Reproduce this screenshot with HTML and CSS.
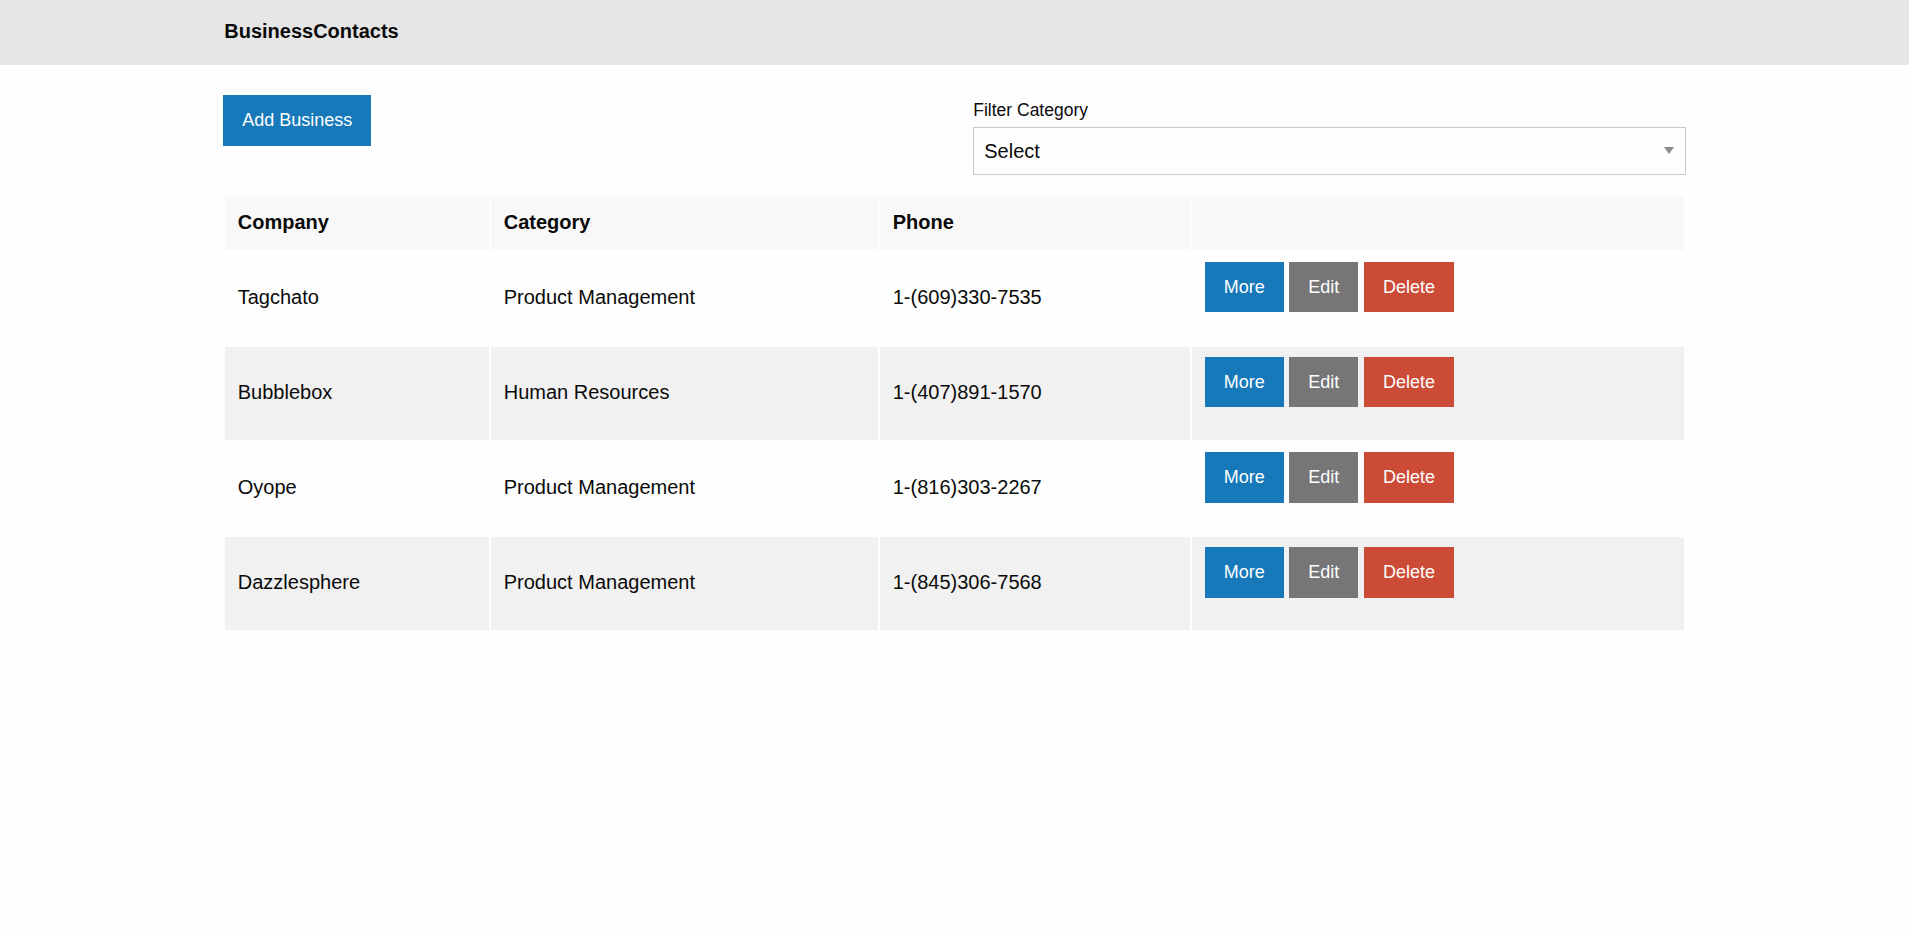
FILE: index.html
```html
<!DOCTYPE html>
<html lang="en">
<head>
<meta charset="utf-8">
<title>BusinessContacts</title>
<link rel="stylesheet" href="styles.css">
</head>
<body>
<header class="topbar">
  <div class="container">
    <span class="brand">BusinessContacts</span>
  </div>
</header>
<main class="container content">
  <div class="toolbar">
    <div class="toolbar-cell">
      <button class="btn btn-primary" type="button">Add Business</button>
    </div>
    <div class="toolbar-cell">
      <label class="field-label">Filter Category
        <span class="select-wrap">
          <select class="select">
            <option>Select</option>
            <option>Product Management</option>
            <option>Human Resources</option>
          </select>
        </span>
      </label>
    </div>
  </div>
  <table class="contacts">
    <colgroup>
      <col class="col-company">
      <col class="col-category">
      <col class="col-phone">
      <col class="col-actions">
    </colgroup>
    <thead>
      <tr><th>Company</th><th>Category</th><th>Phone</th><th></th></tr>
    </thead>
    <tbody>
      <tr>
        <td>Tagchato</td><td>Product Management</td><td>1-(609)330-7535</td>
        <td><button class="btn btn-primary" type="button">More</button> <button class="btn btn-secondary" type="button">Edit</button> <button class="btn btn-alert" type="button">Delete</button></td>
      </tr>
      <tr>
        <td>Bubblebox</td><td>Human Resources</td><td>1-(407)891-1570</td>
        <td><button class="btn btn-primary" type="button">More</button> <button class="btn btn-secondary" type="button">Edit</button> <button class="btn btn-alert" type="button">Delete</button></td>
      </tr>
      <tr>
        <td>Oyope</td><td>Product Management</td><td>1-(816)303-2267</td>
        <td><button class="btn btn-primary" type="button">More</button> <button class="btn btn-secondary" type="button">Edit</button> <button class="btn btn-alert" type="button">Delete</button></td>
      </tr>
      <tr>
        <td>Dazzlesphere</td><td>Product Management</td><td>1-(845)306-7568</td>
        <td><button class="btn btn-primary" type="button">More</button> <button class="btn btn-secondary" type="button">Edit</button> <button class="btn btn-alert" type="button">Delete</button></td>
      </tr>
    </tbody>
  </table>
</main>
</body>
</html>
```
FILE: styles.css
```css
* { box-sizing: border-box; }

html, body {
  margin: 0;
  padding: 0;
}

body {
  background: #fefefe;
  color: #0a0a0a;
  font-family: "Liberation Sans", Arial, sans-serif;
  font-size: 20px;
  line-height: 1.5;
}

.container {
  max-width: 1500px;
  margin: 0 auto;
  padding: 0 18.75px;
}

.topbar {
  background: #e6e6e6;
  height: 65px;
  padding-top: 16px;
}

.brand {
  display: block;
  padding-left: 1px;
  font-weight: 700;
  font-size: 20px;
  line-height: 30px;
}

.content {
  padding-top: 30px;
}

.toolbar {
  display: grid;
  grid-template-columns: 1fr 1fr;
  column-gap: 37.5px;
  align-items: start;
}

.btn {
  display: inline-block;
  vertical-align: middle;
  margin: 0 0 20px 0;
  padding: 15.3px 18px;
  border: 1px solid transparent;
  border-radius: 0;
  font-family: "Liberation Sans", Arial, sans-serif;
  font-size: 18px;
  line-height: 1;
  color: #fefefe;
  text-align: center;
  cursor: pointer;
}

.btn-primary { background: #1779ba; }
.btn-secondary { background: #767676; }
.btn-alert { background: #cc4b37; }

.field-label {
  display: block;
  font-size: 17.5px;
  line-height: 1.8;
  color: #0a0a0a;
}

.select-wrap {
  display: block;
  position: relative;
}

.select-wrap::after {
  content: "";
  position: absolute;
  right: 11.5px;
  top: 20.5px;
  width: 0;
  height: 0;
  border-left: 5px solid transparent;
  border-right: 5px solid transparent;
  border-top: 7.5px solid #8a8a8a;
  pointer-events: none;
}

.select {
  display: block;
  width: 100%;
  height: 48.75px;
  margin: 0 0 20px 0;
  padding: 0 30px 0 10px;
  border: 1px solid #cacaca;
  border-radius: 0;
  background: #fefefe;
  color: #0a0a0a;
  font-family: "Liberation Sans", Arial, sans-serif;
  font-size: 20px;
  line-height: 44px;
  -webkit-appearance: none;
  appearance: none;
  outline: none;
}

.contacts {
  width: 100%;
  table-layout: fixed;
  border-collapse: separate;
  border-spacing: 2px;
  margin: 0 0 20px 0;
}

.col-company { width: 264px; }
.col-category { width: 387px; }
.col-phone { width: 310px; }
.col-actions { width: 491.5px; }

.contacts th,
.contacts td {
  padding: 10px 12.5px 12.5px;
  text-align: left;
  vertical-align: middle;
  line-height: 1.5;
}

.contacts th {
  font-weight: 700;
  background: #f8f8f8;
}

.contacts tbody td { background: #fefefe; }
.contacts tbody tr:nth-child(even) td { background: #f1f1f1; }
```
